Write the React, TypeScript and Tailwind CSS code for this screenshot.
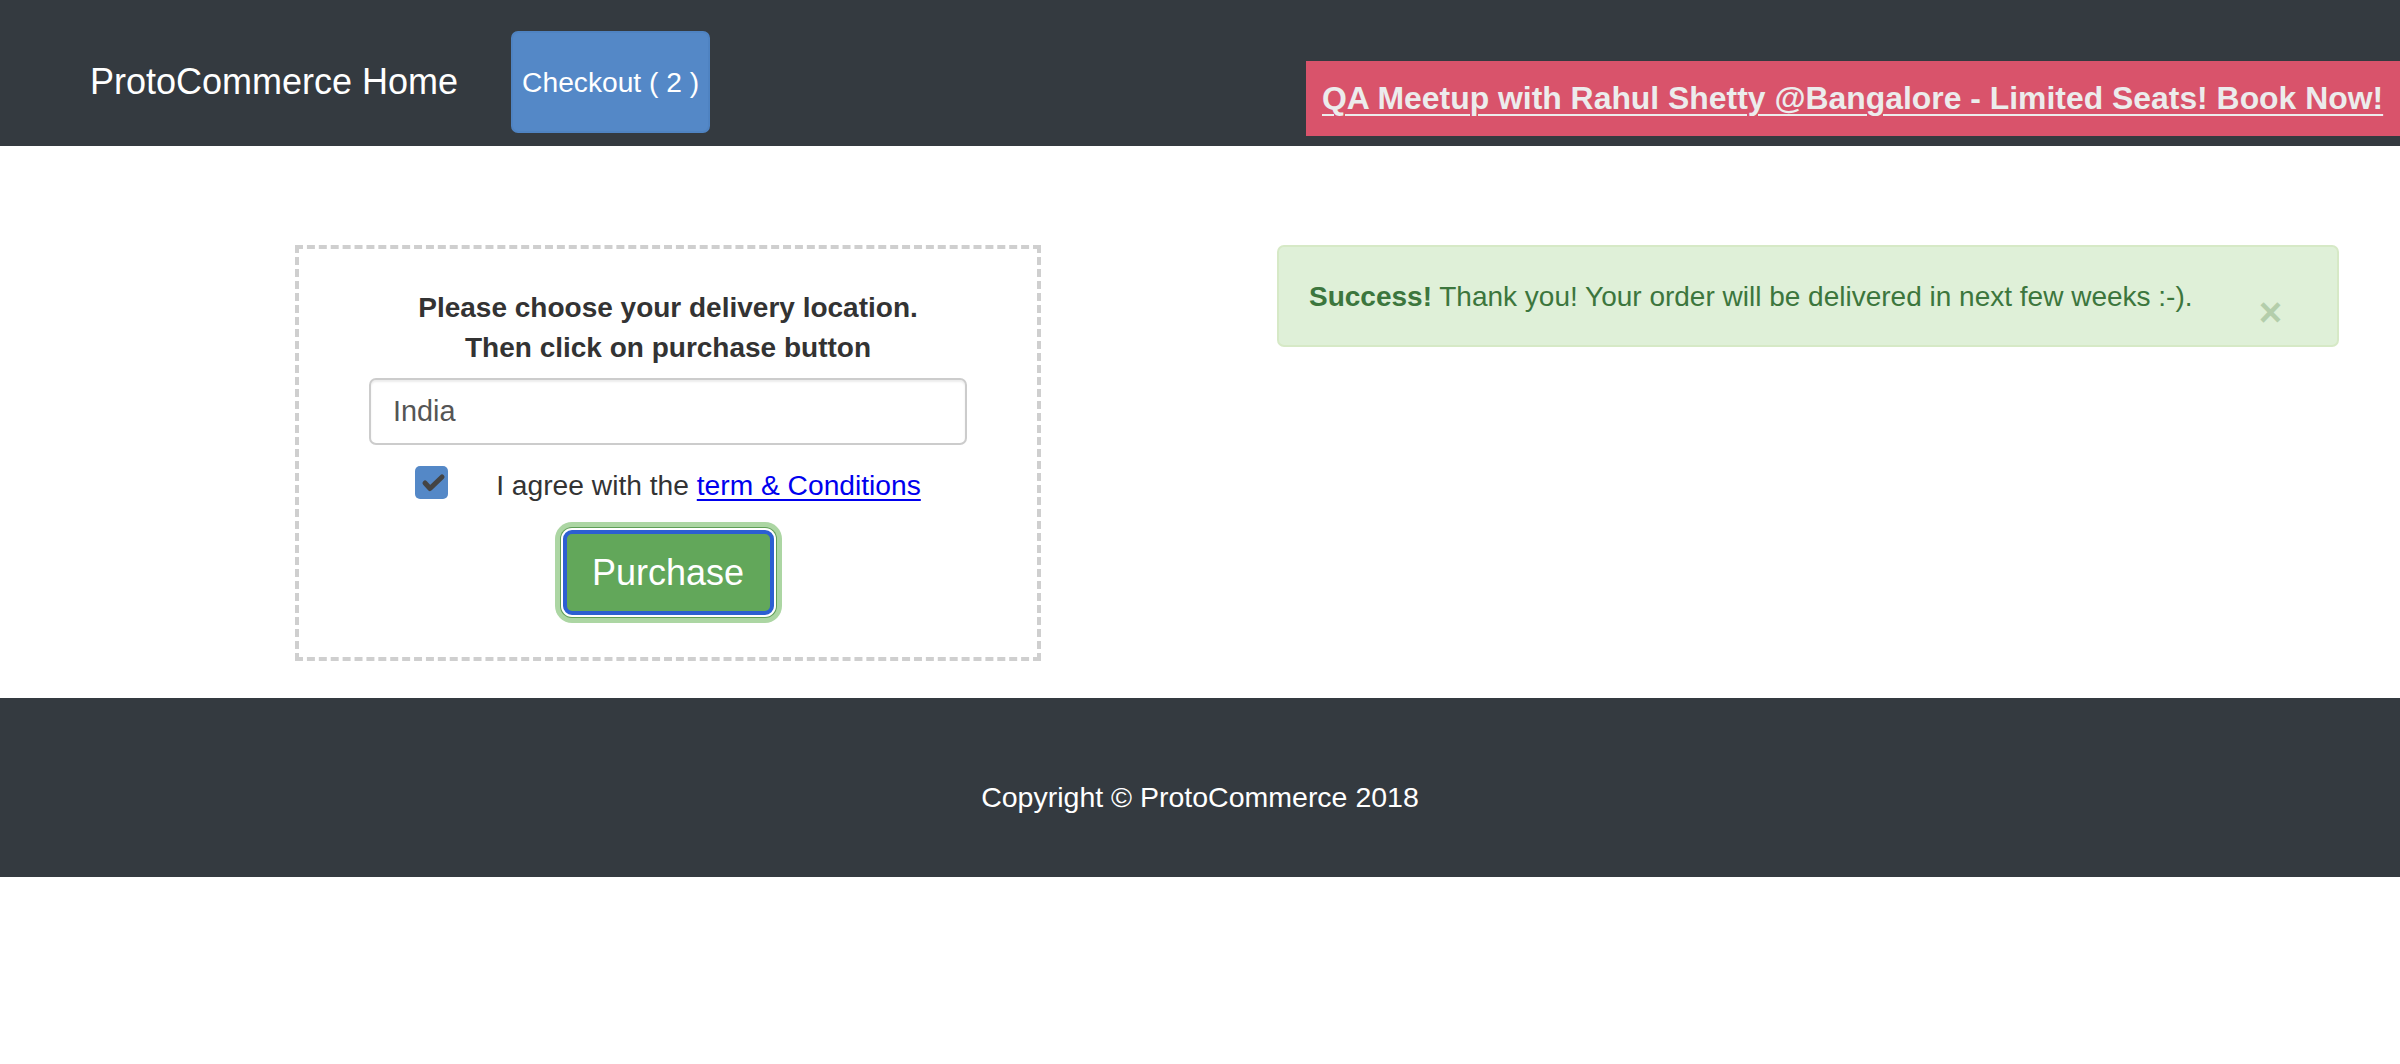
import React, { useState } from 'react';

const App: React.FC = () => {
  const [country, setCountry] = useState('India');
  const [agreed, setAgreed] = useState(true);

  return (
    <div className="min-h-screen bg-white font-['Liberation_Sans',Arial,sans-serif]">
      {/* Top navbar */}
      <header className="flex h-[146px] items-start bg-[#343a40] pl-[90px]">
        <a href="#" className="mt-[64px] text-[36px] leading-none text-white">
          ProtoCommerce Home
        </a>
        <button className="ml-[53px] mt-[31px] flex h-[102px] w-[199px] items-center justify-center rounded-[7px] border-2 border-[#4f83c2] bg-[#5488c7] text-[28.2px] text-white">
          Checkout ( 2 )
        </button>
        <div className="ml-auto mt-[61px] flex h-[75px] w-[1094px] items-center bg-[#d9536b] pl-[16px]">
          <a href="#" className="whitespace-nowrap text-[31.9px] font-bold text-[#ececec] underline decoration-2 underline-offset-[5px]">
            QA Meetup with Rahul Shetty @Bangalore - Limited Seats! Book Now!
          </a>
        </div>
      </header>

      {/* Checkout content */}
      <main className="flex items-start pb-[37px] pt-[99px]">
        <div className="ml-[295px] flex h-[416px] w-[746px] flex-col items-center border-4 border-dashed border-[#cfcfcf] pt-[39px]">
          <p className="text-center text-[28px] font-bold leading-[40px] text-[#333]">
            Please choose your delivery location.
            <br />
            Then click on purchase button
          </p>
          <input
            value={country}
            onChange={e => setCountry(e.target.value)}
            className="mt-[10px] h-[67px] w-[598px] rounded-[7px] border-2 border-[#cccccc] pl-[22px] text-[28.8px] text-[#555] shadow-[inset_0_2px_2px_rgba(0,0,0,0.075)] outline-none"
          />
          <div className="mt-[21px] flex items-center">
            <button
              onClick={() => setAgreed(!agreed)}
              className="flex h-[33px] w-[33px] items-center justify-center rounded-[5px] bg-[#5488c7]"
            >
              {agreed && (
                <svg width="33" height="33" viewBox="0 0 33 33">
                  <path d="M10 17 L15 22.5 L27 11" fill="none" stroke="#444" strokeWidth="5" strokeLinecap="round" strokeLinejoin="round" />
                </svg>
              )}
            </button>
            <label className="ml-[48px] mt-[5px] text-[28.2px] leading-none text-[#333]">
              I agree with the{' '}
              <a href="#" className="text-[#0000ee] underline underline-offset-[4px]">
                term &amp; Conditions
              </a>
            </label>
          </div>
          <button className="mt-[31px] h-[85px] w-[211px] rounded-[9px] border-4 border-[#2c5fd2] bg-[#62a75a] text-[36px] text-white shadow-[0_0_0_2px_#ffffff,0_0_0_3px_#5f9e56,0_0_0_8px_#acd6a3]">
            Purchase
          </button>
        </div>

        <div className="relative ml-[236px] flex h-[102px] w-[1062px] items-center rounded-[7px] border-2 border-[#d6e9c6] bg-[#dff0d8] pl-[30px] text-[28px] text-[#3c763d]">
          <span className="mt-[2px]">
            <strong>Success!</strong> Thank you! Your order will be delivered in next few weeks :-).
          </span>
          <span className="absolute right-[55px] top-[45px] text-[40px] font-bold leading-none text-[#b4ceab]">
            ×
          </span>
        </div>
      </main>

      {/* Footer */}
      <footer className="flex h-[179px] items-center justify-center bg-[#343a40] pt-[19px]">
        <p className="text-[28.5px] text-white">Copyright © ProtoCommerce 2018</p>
      </footer>
    </div>
  );
};

export default App;
